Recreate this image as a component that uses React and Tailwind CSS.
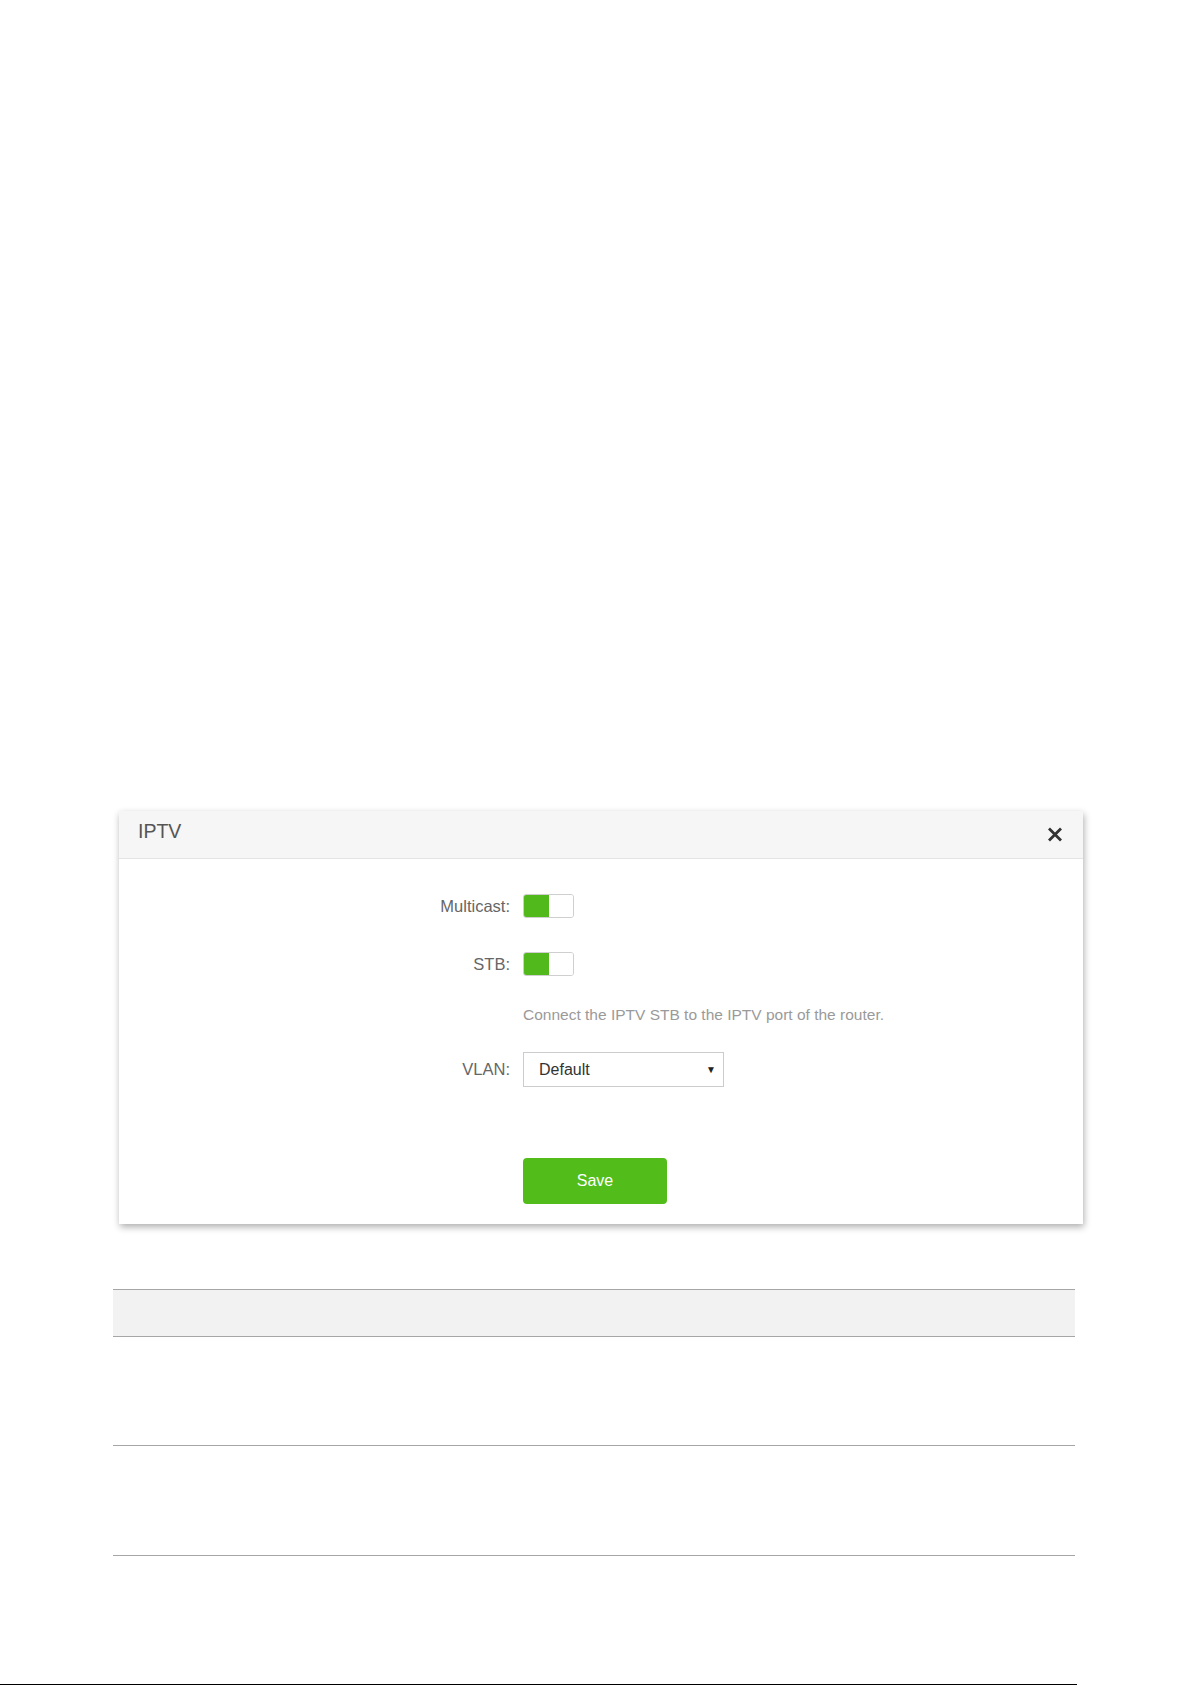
import React from 'react';

const Toggle = () => (
  <div className="flex h-[24px] w-[51px] overflow-hidden rounded-[3px] border border-[#cfcfcf] bg-white shadow-[inset_0_1px_1px_rgba(0,0,0,0.06)]">
    <div className="h-full w-[25px] bg-[#52b91c]" />
    <div className="h-full flex-1 bg-white" />
  </div>
);

const Row = ({ label, children, className = '' }) => (
  <div className={`flex items-center ${className}`}>
    <div className="w-[391px] text-right text-[16.5px] leading-none text-[#666]">{label}</div>
    <div className="ml-[13px]">{children}</div>
  </div>
);

const App = () => {
  return (
    <div className="flex h-[1685px] w-[1192px] flex-col bg-white font-['Liberation_Sans',Arial,sans-serif]">
      {/* IPTV dialog */}
      <div className="ml-[119px] mt-[811px] h-[413px] w-[964px] bg-white shadow-[1px_3px_7px_rgba(0,0,0,0.32)]">
        <div className="flex h-[48px] items-center justify-between border-b border-[#e4e4e4] bg-[#f6f6f6] pb-[6px] pl-[19px] pr-[20px]">
          <span className="text-[19.5px] text-[#555]">IPTV</span>
          <svg width="16" height="15" viewBox="0 0 16 15" className="mt-[6px]">
            <path d="M2 1.5 L14 13.5 M14 1.5 L2 13.5" stroke="#333" strokeWidth="2.8" fill="none" />
          </svg>
        </div>

        <Row label="Multicast:" className="mt-[35px]">
          <Toggle />
        </Row>
        <Row label="STB:" className="mt-[34px]">
          <Toggle />
        </Row>

        <div className="mt-[29px] pl-[404px] text-[15.5px] leading-[20px] text-[#9a9a9a]">
          Connect the IPTV STB to the IPTV port of the router.
        </div>

        <Row label="VLAN:" className="mt-[27px]">
          <div className="relative flex h-[35px] w-[201px] items-center border border-[#cccccc] bg-white pl-[15px] text-[16px] text-[#333]">
            Default
            <span className="absolute right-[7px] top-[9px] text-[10px] text-[#222]">▼</span>
          </div>
        </Row>

        <div className="ml-[404px] mt-[71px] flex h-[46px] w-[144px] items-center justify-center rounded-[4px] bg-[#52bd1a] text-[16px] text-white">
          Save
        </div>
      </div>

      {/* table */}
      <div className="ml-[113px] mt-[65px] w-[962px]">
        <div className="h-[48px] border-y border-[#a6a6a6] bg-[#f2f2f2]" />
        <div className="h-[109px] border-b border-[#a6a6a6]" />
        <div className="h-[110px] border-b border-[#a6a6a6]" />
      </div>

      <div className="mt-auto h-px w-[1077px] bg-black" />
    </div>
  );
};

export default App;
